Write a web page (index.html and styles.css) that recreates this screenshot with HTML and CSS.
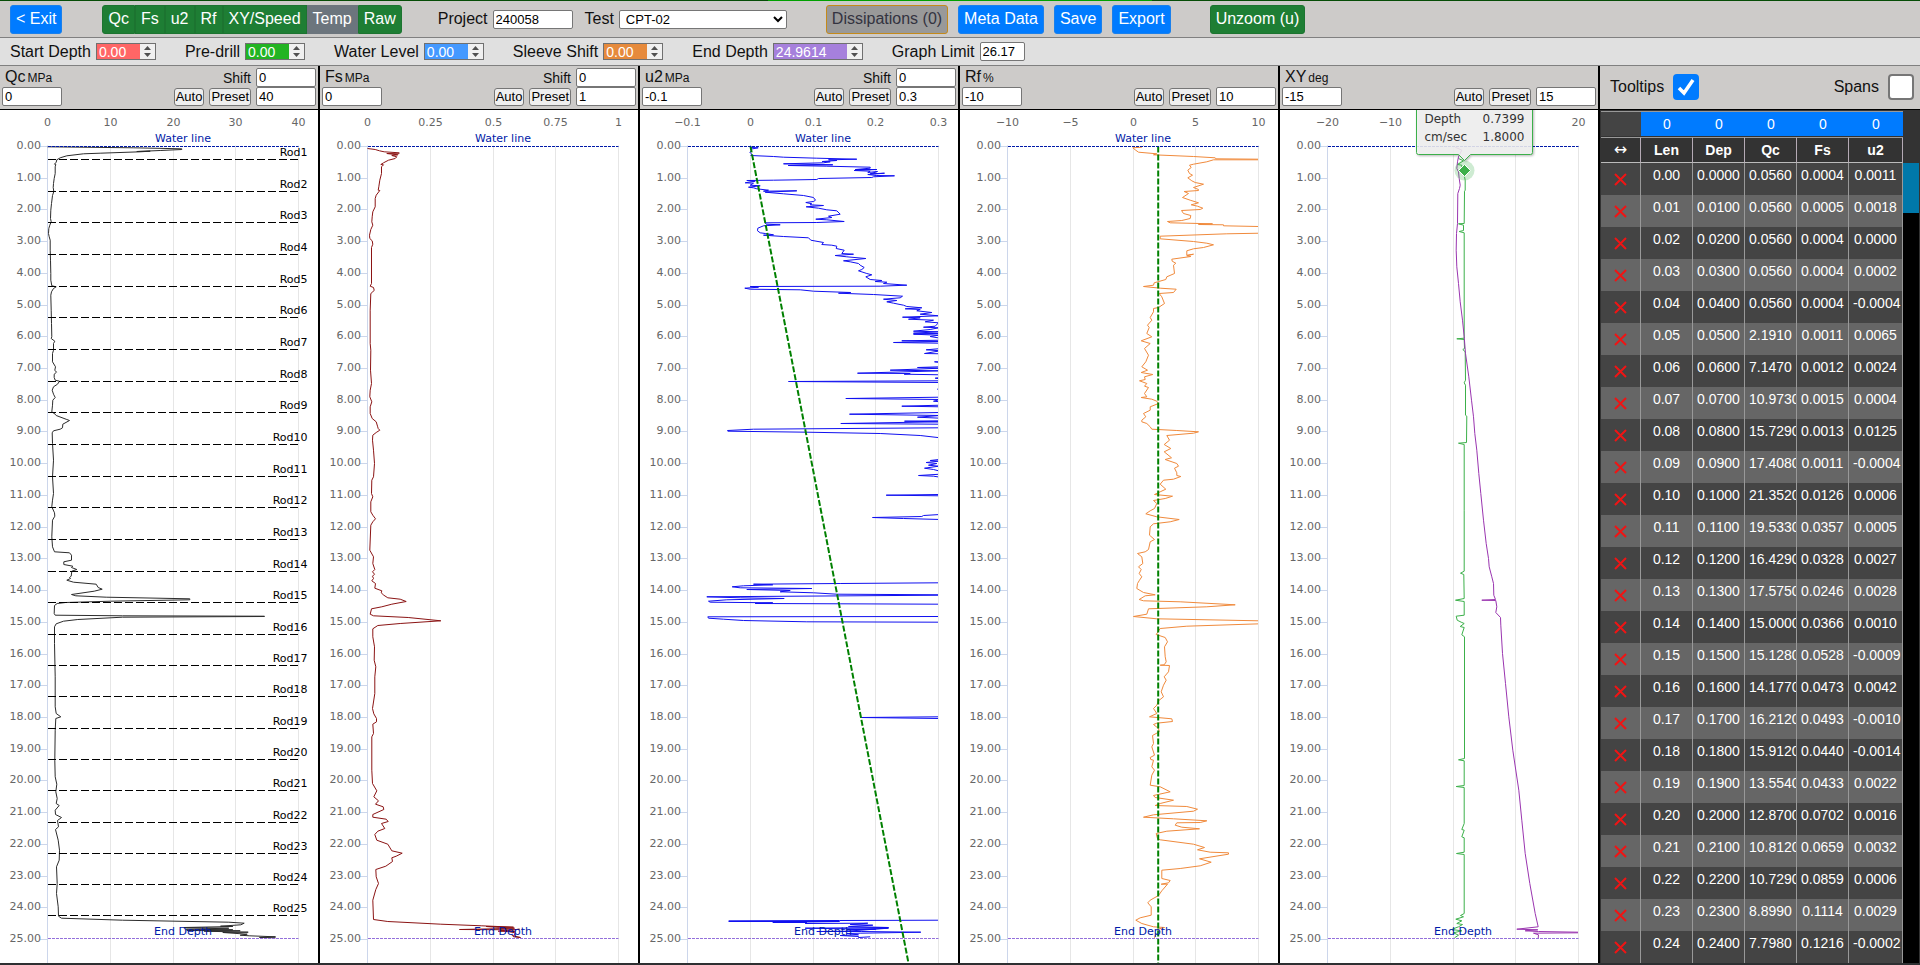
FILE: index.html
```html
<!DOCTYPE html>
<html lang="en">
<head>
    <meta charset="UTF-8">
    <meta name="viewport" content="width=device-width, initial-scale=1.0">
    <title>CPT Editor</title>
    <link rel="stylesheet" href="styles.css">
</head>
<body>
    <div class="progress"></div>
    <header class="toolbar">
        <button class="btn blue exit">&lt; Exit</button>
        <div class="btn-group">
            <button class="btn green">Qc</button>
            <button class="btn green">Fs</button>
            <button class="btn green">u2</button>
            <button class="btn green">Rf</button>
            <button class="btn green">XY/Speed</button>
            <button class="btn grey">Temp</button>
            <button class="btn green">Raw</button>
        </div>
        <div class="field project">
            <label for="project">Project</label>
            <input type="text" id="project" value="240058">
        </div>
        <div class="field test">
            <label for="test">Test</label>
            <select id="test"><option>CPT-02</option></select>
        </div>
        <div class="actions">
            <button class="btn dissipations" disabled>Dissipations (0)</button>
            <button class="btn blue">Meta Data</button>
            <button class="btn blue">Save</button>
            <button class="btn blue">Export</button>
        </div>
        <button class="btn green">Unzoom (u)</button>
    </header>

    <section class="settings">
        <div class="field">
            <label for="startDepth">Start Depth</label>
            <input class="red" type="number" id="startDepth" step="0.01" value="0.00">
        </div>
        <div class="field">
            <label for="predrill">Pre-drill</label>
            <input class="lime" type="number" id="predrill" step="0.01" value="0.00">
        </div>
        <div class="field">
            <label for="waterLevel">Water Level</label>
            <input class="sky" type="number" id="waterLevel" step="0.01" value="0.00">
        </div>
        <div class="field">
            <label for="sleeveShift">Sleeve Shift</label>
            <input class="orange" type="number" id="sleeveShift" step="0.01" value="0.00">
        </div>
        <div class="field">
            <label for="endDepth">End Depth</label>
            <input class="purple" type="number" id="endDepth" step="0.0001" value="24.9614">
        </div>
        <div class="field">
            <label for="graphLimit">Graph Limit</label>
            <input class="limit" type="text" id="graphLimit" value="26.17">
        </div>
    </section>

    <main class="main">
        <section class="panel">
            <div class="panel-head">
                <div class="panel-left">
                    <h2>Qc<small>MPa</small></h2>
                    <input type="text" value="0" aria-label="Qc minimum">
                </div>
                <div class="panel-right">
                    <div class="line"><label for="qcShift">Shift</label><input type="text" id="qcShift" value="0"></div>
                    <div class="line"><button>Auto</button><button>Preset</button><input type="text" value="40" aria-label="Qc maximum"></div>
                </div>
            </div>
            <svg class="chart" id="qc"></svg>
        </section>
        <section class="panel">
            <div class="panel-head">
                <div class="panel-left">
                    <h2>Fs<small>MPa</small></h2>
                    <input type="text" value="0" aria-label="Fs minimum">
                </div>
                <div class="panel-right">
                    <div class="line"><label for="fsShift">Shift</label><input type="text" id="fsShift" value="0"></div>
                    <div class="line"><button>Auto</button><button>Preset</button><input type="text" value="1" aria-label="Fs maximum"></div>
                </div>
            </div>
            <svg class="chart" id="fs"></svg>
        </section>
        <section class="panel">
            <div class="panel-head">
                <div class="panel-left">
                    <h2>u2<small>MPa</small></h2>
                    <input type="text" value="-0.1" aria-label="u2 minimum">
                </div>
                <div class="panel-right">
                    <div class="line"><label for="u2Shift">Shift</label><input type="text" id="u2Shift" value="0"></div>
                    <div class="line"><button>Auto</button><button>Preset</button><input type="text" value="0.3" aria-label="u2 maximum"></div>
                </div>
            </div>
            <svg class="chart" id="u2"></svg>
        </section>
        <section class="panel">
            <div class="panel-head">
                <div class="panel-left">
                    <h2>Rf<small>%</small></h2>
                    <input type="text" value="-10" aria-label="Rf minimum">
                </div>
                <div class="panel-right">
                    <div class="line"><button>Auto</button><button>Preset</button><input type="text" value="10" aria-label="Rf maximum"></div>
                </div>
            </div>
            <svg class="chart" id="rf"></svg>
        </section>
        <section class="panel">
            <div class="panel-head">
                <div class="panel-left">
                    <h2>XY<small>deg</small></h2>
                    <input type="text" value="-15" aria-label="XY minimum">
                </div>
                <div class="panel-right">
                    <div class="line"><button>Auto</button><button>Preset</button><input type="text" value="15" aria-label="XY maximum"></div>
                </div>
            </div>
            <svg class="chart" id="xy"></svg>
        </section>

        <aside class="side">
            <div class="side-head">
                <div class="check">
                    <label for="tooltips">Tooltips</label>
                    <input type="checkbox" id="tooltips" checked>
                </div>
                <div class="check">
                    <label for="spans">Spans</label>
                    <input type="checkbox" id="spans">
                </div>
            </div>
            <div class="side-body">
                <table class="readings">
                    <colgroup><col class="c-del"><col><col><col><col><col class="c-last"></colgroup>
                    <thead>
                        <tr class="sums"><td></td><td>0</td><td>0</td><td>0</td><td>0</td><td>0</td></tr>
                        <tr class="names"><th class="arrow">&#8596;</th><th>Len</th><th>Dep</th><th>Qc</th><th>Fs</th><th>u2</th></tr>
                    </thead>
                    <tbody id="rows"></tbody>
                </table>
                <div class="scroll"><div class="thumb"></div></div>
            </div>
        </aside>
    </main>
    <div class="bottom"></div>
    <script src="script.js"></script>
</body>
</html>
```

FILE: styles.css
```css
* {
    margin: 0;
    padding: 0;
    box-sizing: border-box;
}
body {
    height: 100vh;
    display: flex;
    flex-direction: column;
    overflow: hidden;
    font-family: "Liberation Sans", Arial, sans-serif;
    font-size: 16px;
    color: #111;
    background: #fff;
}
input, select, button {
    font-family: inherit;
    font-size: 13px;
}
input, select {
    height: 19px;
    border: 1px solid #767676;
    border-radius: 2px;
    background: #fff;
    color: #000;
    padding: 0 2px;
}
.progress {
    height: 1px;
    flex: none;
    background: linear-gradient(to right, #064d06 40%, #00a000 40%, #00a000 60%, #064d06 60%);
}

/* top bars */
.toolbar {
    display: flex;
    align-items: center;
    height: 37px;
    flex: none;
    padding: 0 10px;
    background: #cdcbc9;
    border-bottom: 1px solid #808080;
}
.btn {
    height: 29px;
    padding: 0 5px;
    border: 1px solid transparent;
    border-radius: 3px;
    font-size: 16px;
    color: #fff;
    white-space: nowrap;
}
.blue {
    background: #007bff;
    border-color: #1a80ec;
}
.green {
    background: #1e7e34;
    border-color: #1c7430;
}
.grey {
    background: #6c757d;
    border-color: #6c757d;
}
.dissipations {
    background: #999;
    border-color: #c48a1a;
    color: #333340;
}
.exit {
    margin-right: 40px;
}
.btn-group {
    display: flex;
    margin-right: 36px;
}
.btn-group .btn {
    border-radius: 0;
}
.btn-group .btn:first-child {
    border-radius: 3px 0 0 3px;
}
.btn-group .btn:last-child {
    border-radius: 0 3px 3px 0;
}
.field {
    display: flex;
    align-items: center;
    gap: 5px;
    white-space: nowrap;
}
.project {
    margin-right: 12px;
}
.project input {
    width: 80px;
}
.test {
    margin-right: 39px;
}
.test select {
    width: 168px;
}
.actions {
    display: flex;
    gap: 10px;
    margin-right: 39px;
}
.settings {
    display: flex;
    align-items: center;
    gap: 29px;
    height: 28px;
    flex: none;
    padding: 0 10px;
    background: #e0e0e0;
    border-bottom: 1px solid #808080;
}
.settings input[type=number] {
    width: 60px;
    height: 17px;
    border: 1px solid #707070;
    border-radius: 0;
    padding: 0 0 0 2px;
    font-size: 14px;
    color: #fff;
}
.settings input::-webkit-inner-spin-button {
    appearance: none;
    opacity: 1;
    width: 15px;
    height: 15px;
    background: #f0f0f0 url("data:image/svg+xml,%3Csvg xmlns='http://www.w3.org/2000/svg' viewBox='0 0 15 15'%3E%3Cpath d='M4 6l3.5-4L11 6zM4 9l3.5 4L11 9z' fill='%23505050'/%3E%3C/svg%3E");
}
.settings .red { background: #ff6666; }
.settings .lime { background: #22b422; }
.settings .sky { background: #4499ff; }
.settings .orange { background: #e68a3c; }
.settings .purple { background: #a680dc; }
.settings #endDepth {
    width: 90px;
}
.settings .limit {
    width: 45px;
}

/* chart panels */
.main {
    flex: 1;
    min-height: 0;
    display: grid;
    grid-template-columns: repeat(6, minmax(0, 1fr));
}
.panel {
    display: flex;
    flex-direction: column;
    min-height: 0;
    border-right: 2px solid #000;
}
.panel-head {
    display: flex;
    justify-content: space-between;
    height: 44px;
    flex: none;
    padding: 2px 2px 3px;
    background: #cdcbc9;
    border-bottom: 1px solid #000;
}
.panel-head input {
    width: 60px;
}
.panel-left, .panel-right {
    display: flex;
    flex-direction: column;
    justify-content: space-between;
}
.panel-right {
    align-items: flex-end;
    justify-content: flex-end;
}
.panel-left h2 {
    font-size: 16px;
    line-height: 18px;
    font-weight: normal;
    padding-left: 3px;
}
.panel-left small {
    font-size: 12px;
    margin-left: 2px;
}
.line {
    display: flex;
    align-items: center;
    gap: 5px;
    font-size: 14px;
}
.line button {
    height: 18px;
    padding: 0 1px;
    border: 1px solid #767676;
    border-radius: 3px;
    background: #efefef;
    color: #000;
    font-size: 13px;
}
.chart {
    flex: 1;
    min-height: 0;
    width: 100%;
    display: block;
    overflow: hidden;
    font-family: "DejaVu Sans", Verdana, sans-serif;
    font-size: 11px;
}
.grid { stroke: #e6e6e6; }
.axis { stroke: #ccd6eb; }
.tick { fill: #666; }
.trace {
    fill: none;
    stroke-width: 1;
    stroke-linejoin: round;
}
.hydro {
    stroke: #008000;
    stroke-width: 2;
    stroke-dasharray: 6 2;
}
.water {
    stroke: #001aa8;
    stroke-dasharray: 3 1;
}
.end {
    stroke: #9370db;
    stroke-dasharray: 3 1;
}
.note { fill: #001aa8; }
.rod {
    stroke: #000;
    stroke-dasharray: 8 3;
}
.rod-name { fill: #000; }
.tip {
    fill: #f7f7f7;
    fill-opacity: 0.85;
    stroke: #3cb04a;
    filter: drop-shadow(1px 1px 1px rgba(0, 0, 0, 0.3));
}
.tip-text {
    fill: #333;
    font-size: 12px;
}

/* readings table */
.side {
    display: flex;
    flex-direction: column;
    min-height: 0;
    overflow: hidden;
    background: #333;
}
.side-head {
    display: flex;
    justify-content: space-between;
    align-items: center;
    height: 44px;
    flex: none;
    padding: 0 6px 2px 10px;
    background: #cdcbc9;
    border-bottom: 1px solid #000;
}
.check {
    display: flex;
    align-items: center;
    gap: 9px;
}
.check input {
    appearance: none;
    width: 26px;
    height: 26px;
    border: 2px solid #767676;
    border-radius: 4px;
}
.check input:checked {
    border-color: #007bff;
    background: #007bff url("data:image/svg+xml,%3Csvg xmlns='http://www.w3.org/2000/svg' viewBox='0 0 22 22'%3E%3Cpath d='M4 12l5 5 9-13' fill='none' stroke='white' stroke-width='3.5'/%3E%3C/svg%3E");
}
.side-body {
    flex: 1;
    min-height: 0;
    display: flex;
    overflow: hidden;
    padding: 1px 1px 0;
}
.readings {
    flex: 1;
    width: 100%;
    table-layout: fixed;
    border-collapse: separate;
    border-spacing: 0;
    font-size: 14px;
    color: #fff;
    text-align: center;
    align-self: flex-start;
}
.c-del { width: 40px; }
.c-last { width: 54px; }
.readings td, .readings th {
    padding: 0 4px;
    overflow: hidden;
    white-space: nowrap;
    border-right: 1px solid #999;
}
.sums td {
    height: 26px;
    background: #007bff;
    border-top: 1px solid #999;
    border-right: none;
    border-bottom: 1px solid #333;
}
.sums td:first-child {
    background: #444;
}
.readings .names th {
    height: 26px;
    border-top: 1px solid #999;
    border-bottom: 1px solid #bbb;
    border-right-color: #b5aab5;
}
.readings .names .arrow {
    font-family: "DejaVu Sans", sans-serif;
    font-size: 16px;
    line-height: 16px;
    font-weight: normal;
}
.readings tbody td {
    height: 32px;
    line-height: 16px;
    padding-top: 4px;
    vertical-align: top;
    background: #444;
}
.readings tbody tr:nth-child(even) td {
    background: #666;
}
.del {
    display: block;
    width: 13px;
    height: 13px;
    margin: 6px auto 0;
    background: none;
    border: none;
}
.del svg {
    display: block;
    stroke: #f01414;
    stroke-width: 2;
}
.scroll {
    width: 16px;
    margin-top: 52px;
    background: #000;
}
.thumb {
    height: 50px;
    background: #0078aa;
}
.bottom {
    height: 2px;
    flex: none;
    background: #2e3032;
}
```

FILE: script.js
```javascript
// plot margins inside each chart
const LEFT = 47.5, RIGHT = 19.5, TOP = 36.5, BOTTOM = 23.5;
const END_DEPTH = 24.9614;

// trace points and rod lines are stored on a 753 x 2379 grid that starts at 142,109
const GX = 142, GY = 109, GW = 753, GH = 2379;

const charts = {
    qc: {
        labels: ['0', '10', '20', '30', '40'],
        rods: [148, 244, 337, 433, 529, 622, 718, 814, 907, 1003, 1099, 1192, 1288, 1384, 1477, 1573, 1666, 1759, 1855, 1948, 2041, 2137, 2230, 2323, 2416],
        traces: [['#2c2c2c', '144,109 143,110 400,113 545,116 545,118 480,121 410,124 450,123 420,125 300,129 250,131 200,137 180,143 170,149 168,156 163,162 167,163 165,170 165,190 162,205 160,220 159,232 161,244 157,256 154,280 152,300 151,325 153,335 149,345 146,355 145,370 147,380 150,390 150,420 151,450 152,490 152,510 155,527 168,530 160,535 154,545 152,555 153,600 154,640 155,680 153,685 164,693 160,700 160,720 157,730 157,755 166,770 164,780 169,786 162,792 162,802 165,810 178,813 172,822 160,830 156,840 160,852 165,862 158,870 157,885 155,905 165,912 168,916 200,928 208,931 188,942 187,953 180,957 160,962 156,968 157,1000 160,1050 157,1100 160,1150 157,1170 155,1190 163,1208 164,1218 157,1230 155,1280 157,1310 163,1325 208,1328 214,1335 214,1350 191,1355 191,1363 218,1368 214,1372 230,1378 215,1383 213,1398 208,1402 211,1405 200,1410 220,1416 288,1422 294,1432 306,1437 282,1443 214,1453 227,1457 318,1461 569,1466 569,1469 331,1473 196,1477 171,1480 163,1486 162,1510 165,1515 367,1517 793,1518 793,1519 367,1521 233,1528 190,1533 168,1541 163,1550 163,1600 165,1700 165,1790 168,1810 182,1820 167,1825 165,1860 164,1950 165,2000 170,2022 167,2045 171,2065 168,2080 177,2086 165,2100 166,2113 184,2122 172,2131 175,2150 166,2158 174,2190 178,2220 177,2250 169,2270 171,2320 169,2350 174,2390 175,2418 184,2424 367,2430 686,2436 732,2439 722,2444 661,2448 698,2449 551,2452 686,2454 558,2457 698,2459 560,2461 720,2462 612,2463 744,2466 668,2467 741,2472 720,2475 747,2477 826,2480 778,2482 826,2483']]
    },
    fs: {
        labels: ['0', '0.25', '0.5', '0.75', '1'],
        traces: [['#8b1414', '142,115 165,118 178,122 192,125 237,128 236,131 200,130 233,134 215,136 230,140 225,145 205,150 190,158 182,163 190,164 184,170 184,190 179,210 176,230 174,240 179,241 168,255 165,265 165,290 158,305 156,320 155,335 158,345 152,358 148,375 149,385 156,392 158,402 154,412 154,520 150,528 160,532 162,540 157,546 152,550 150,600 150,700 152,720 151,780 154,820 150,840 149,860 155,875 150,890 150,910 156,925 168,935 172,948 174,955 179,960 168,967 158,975 157,990 160,1020 163,1060 160,1100 155,1110 154,1150 158,1160 152,1175 152,1205 158,1215 166,1226 158,1235 152,1245 149,1320 160,1340 158,1360 164,1378 157,1385 163,1392 157,1398 160,1405 155,1412 166,1420 164,1434 185,1442 183,1448 191,1455 203,1463 240,1467 258,1474 215,1482 185,1490 154,1496 150,1512 160,1517 264,1522 362,1532 240,1540 173,1546 158,1556 158,1580 163,1610 162,1650 167,1670 164,1700 164,1750 157,1795 161,1811 169,1825 169,1835 158,1842 160,1870 155,1880 155,1980 157,2020 170,2042 161,2060 175,2072 166,2082 189,2090 191,2098 158,2113 158,2121 198,2127 204,2134 184,2140 194,2155 173,2163 164,2173 170,2190 203,2202 215,2222 246,2229 228,2238 215,2243 217,2254 197,2268 167,2278 168,2300 175,2320 167,2338 158,2370 160,2428 203,2434 362,2442 485,2447 580,2451 498,2449 583,2454 520,2456 418,2458 580,2459 598,2457 534,2463 585,2464 540,2460 585,2468 580,2480 601,2482 575,2476']]
    },
    u2: {
        labels: ['−0.1', '0', '0.1', '0.2', '0.3'],
        hydro: [331, 109, 805, 2559],
        traces: [['#1010f0', '331,106 333,112 354,113 331,117 335,122 329,126 335,132 332,136 400,139 430,141 530,144 650,147 565,149 590,151 546,154 570,155 550,158 430,161 578,164 444,166 560,168 690,171 690,174 645,178 710,178 642,181 690,183 683,187 712,184 690,191 733,189 683,193 708,196 763,197 700,200 695,202 535,205 530,208 400,210 320,211 345,213 315,218 340,219 330,225 360,227 325,231 340,233 350,236 385,240 370,243 470,242 375,246 430,251 490,256 520,262 526,270 520,274 497,277 515,281 510,284 550,286 498,290 535,294 560,299 590,302 600,312 565,318 575,322 527,327 560,329 612,334 530,337 375,338 378,342 420,344 370,347 353,354 352,362 360,368 375,370 400,374 370,375 430,379 505,383 512,390 550,397 545,403 575,405 590,408 588,415 612,420 605,430 640,432 585,436 620,440 677,445 610,452 630,455 655,460 660,465 672,472 665,478 655,482 680,490 695,494 677,500 690,508 725,511 705,514 740,516 730,520 800,525 720,528 330,529 355,531 314,534 330,537 480,539 520,543 632,547 595,549 700,553 787,558 780,563 730,567 770,571 740,575 760,579 790,585 800,589 845,593 795,596 840,598 830,602 875,607 840,612 895,617 787,621 840,623 805,627 880,630 855,635 895,638 885,648 850,651 895,653 870,658 820,663 895,665 820,669 895,670 820,672 895,675 870,679 900,684 900,690 785,692 900,694 760,697 900,699 905,715 858,719 900,722 853,730 900,731 900,755 883,755 900,757 900,770 832,772 900,774 750,780 900,782 652,789 810,790 792,792 900,794 900,802 885,804 900,806 900,812 445,814 900,817 900,835 892,837 900,839 900,861 617,865 900,868 880,873 900,875 900,885 785,888 900,890 900,907 628,912 900,916 832,921 900,924 900,932 793,933 900,935 602,940 900,942 900,953 340,957 262,961 263,963 500,966 720,970 840,976 900,983 905,1047 870,1051 895,1053 858,1057 890,1060 865,1065 895,1068 853,1074 880,1078 895,1082 900,1092 835,1096 880,1098 900,1101 900,1153 738,1155 900,1157 900,1213 850,1216 845,1219 697,1222 790,1225 900,1228 900,1418 600,1420 340,1422 398,1424 310,1427 276,1430 300,1433 515,1435 320,1438 450,1441 420,1445 520,1448 590,1452 900,1454 900,1455 200,1460 300,1463 432,1465 260,1469 205,1473 210,1476 398,1478 345,1480 600,1481 900,1482 900,1519 203,1520 205,1524 250,1527 310,1531 500,1535 900,1536 900,1820 662,1822 900,1825 900,2430 598,2431 266,2432 266,2434 598,2434 398,2437 500,2437 495,2440 683,2439 630,2443 698,2445 625,2449 745,2452 495,2454 707,2457 620,2459 745,2454 620,2463 530,2464 665,2464 842,2466 660,2469 620,2470 655,2474 600,2476 655,2479 655,2482 690,2480']]
    },
    rf: {
        labels: ['−10', '−5', '0', '5', '10'],
        hydro: [594, 109, 594, 2559],
        traces: [['#f08a3c', '550,106 545,111 518,113 525,119 535,126 590,131 580,134 700,139 765,143 767,146 895,147 895,149 760,149 740,155 700,162 688,165 693,172 683,180 688,190 697,195 683,203 695,212 705,217 730,222 700,232 715,238 715,241 672,244 685,250 667,262 690,270 715,278 693,284 712,288 728,294 720,298 664,301 670,310 692,316 690,325 665,331 622,334 630,338 757,341 715,343 790,344 790,347 895,349 900,355 900,369 800,371 600,378 600,386 700,394 740,399 760,404 730,412 700,416 680,422 680,435 700,432 680,437 692,439 635,447 636,453 647,459 640,465 643,490 620,500 617,508 582,518 580,525 550,529 600,534 648,537 640,547 597,550 605,560 613,580 595,592 580,595 580,605 570,622 575,630 562,645 567,652 560,670 575,680 543,692 570,700 553,715 565,735 557,755 545,770 562,780 543,787 578,793 553,800 555,808 538,812 560,820 553,828 565,832 553,850 560,860 543,862 575,867 590,873 595,880 570,890 570,900 550,910 557,920 545,930 545,935 560,940 570,950 575,957 650,961 715,965 700,969 620,976 628,990 612,1003 632,1015 612,1025 634,1043 615,1048 650,1060 655,1068 643,1074 650,1088 650,1096 662,1099 640,1107 610,1110 600,1122 617,1137 600,1145 583,1153 637,1158 615,1165 580,1171 590,1180 583,1195 570,1202 557,1211 590,1220 657,1228 630,1235 580,1241 570,1250 568,1275 583,1288 570,1295 565,1318 555,1325 532,1330 545,1340 548,1360 535,1370 543,1378 537,1390 545,1400 538,1410 532,1420 530,1435 550,1447 585,1454 555,1457 537,1468 550,1472 660,1475 825,1484 740,1490 565,1496 560,1512 520,1519 590,1526 895,1532 900,1541 680,1548 600,1555 588,1573 615,1582 622,1595 613,1610 615,1640 618,1655 612,1664 600,1665 628,1666 625,1685 612,1700 618,1710 610,1725 603,1745 610,1760 595,1772 590,1785 580,1795 590,1810 568,1820 635,1826 637,1834 590,1839 580,1843 595,1855 597,1865 577,1876 580,1900 575,1910 583,1935 570,1942 572,1948 580,1950 575,1970 583,1980 575,1995 570,2025 600,2030 630,2045 580,2056 585,2062 640,2070 600,2080 585,2086 680,2089 712,2097 700,2103 580,2114 550,2121 640,2126 740,2132 720,2137 650,2138 645,2145 665,2151 718,2156 620,2163 588,2170 592,2185 600,2189 700,2202 733,2212 712,2219 750,2226 805,2228 805,2232 718,2246 753,2256 720,2267 660,2275 605,2280 605,2305 630,2311 625,2318 603,2322 622,2322 605,2342 595,2356 570,2370 563,2378 573,2390 573,2415 540,2423 527,2430 545,2440 580,2450 613,2452 590,2458 600,2465 585,2475 583,2483']]
    },
    xy: {
        labels: ['−20', '−10', '', '', '20'],
        tooltip: [['Depth', '0.7399'], ['cm/sec', '1.8000']],
        traces: [
            ['#3cb04a', '535,145 550,152 532,163 545,165 545,175 552,181 553,200 555,210 555,240 553,243 552,340 535,341 550,345 550,361 537,364 552,368 552,684 530,686 552,688 553,715 548,718 555,725 556,810 552,818 556,825 556,915 560,918 559,997 535,999 552,1003 552,1200 552,1383 541,1389 551,1393 552,1465 526,1470 552,1474 552,1515 528,1518 531,1530 543,1536 552,1540 540,1549 552,1552 545,1574 553,1580 553,1945 535,1949 552,1952 552,2026 528,2029 552,2032 552,2140 545,2158 552,2160 545,2180 552,2183 552,2226 529,2230 552,2233 552,2410 541,2416 550,2420 527,2427 545,2432 530,2440 547,2443 535,2450 514,2458 545,2462 520,2468 535,2475 523,2483'],
            ['#9a35b0', '525,111 545,120 535,140 532,155 530,175 535,185 537,205 540,225 538,235 533,250 532,340 529,370 528,420 530,470 535,520 540,575 547,630 552,680 556,730 566,800 574,870 580,920 584,970 590,1020 596,1090 602,1150 610,1230 618,1300 625,1345 627,1370 635,1400 640,1420 641,1455 646,1468 605,1470 647,1471 650,1490 647,1507 661,1522 662,1545 667,1630 676,1720 686,1820 698,1920 716,2040 725,2130 735,2230 749,2320 765,2410 774,2450 710,2457 773,2459 735,2462 775,2464 895,2466 895,2468 760,2469 775,2474 774,2484']
        ]
    }
};

function line(cls, x1, y1, x2, y2) {
    return `<line class="${cls}" x1="${x1}" y1="${y1}" x2="${x2}" y2="${y2}"/>`;
}
function text(cls, x, y, anchor, str) {
    return `<text class="${cls}" x="${x}" y="${y}" text-anchor="${anchor}">${str}</text>`;
}

function drawChart(id) {
    const svg = document.getElementById(id);
    const chart = charts[id];
    const w = svg.clientWidth, h = svg.clientHeight;
    const pw = w - LEFT - RIGHT;
    const metre = (h - TOP - BOTTOM) / 25;
    const right = LEFT + pw;
    const px = x => (LEFT + (x - GX) / GW * pw).toFixed(1);
    const py = y => (TOP + (y - GY) / GH * metre * 25).toFixed(1);
    const row = d => Math.floor(TOP + d * metre);
    let out = '';

    chart.labels.forEach((label, i) => {
        const x = Math.floor(LEFT + pw * i / 4) + 0.5;
        out += line(i ? 'grid' : 'axis', x, TOP - 1, x, h);
        out += text('tick', x, 16, 'middle', label);
    });
    for (let d = 0; d <= 25; d++) {
        out += line('axis', 40, row(d) + 0.5, LEFT, row(d) + 0.5);
        out += text('tick', 41, row(d) + 3, 'end', d.toFixed(2));
    }

    out += `<clipPath id="clip-${id}"><rect x="${LEFT - 0.5}" y="${TOP - 1}" width="${pw}" height="${h}"/></clipPath>`;
    out += `<g clip-path="url(#clip-${id})">`;
    chart.traces.forEach(([color, pts]) => {
        const points = pts.split(' ').map(p => {
            const [x, y] = p.split(',');
            return px(x) + ',' + py(y);
        }).join(' ');
        out += `<polyline class="trace" stroke="${color}" points="${points}"/>`;
    });
    if (chart.hydro) {
        const [x1, y1, x2, y2] = chart.hydro;
        out += line('hydro', px(x1), py(y1), px(x2), py(y2));
    }
    out += '</g>';

    // plot lines
    const start = Math.ceil(LEFT);
    out += line('water', start, TOP, right, TOP);
    const endY = row(END_DEPTH) + 0.5;
    out += line('end', start, endY, right, endY);
    const mid = LEFT + pw / 2 + 10;
    if (!chart.tooltip) out += text('note', mid, 32, 'middle', 'Water line');
    out += text('note', mid, endY - 4, 'middle', 'End Depth');
    (chart.rods || []).forEach((rod, i) => {
        const y = Math.floor(py(rod)) + 0.5;
        out += line('rod', start, y, right, y);
        out += text('rod-name', right + 9, y - 4, 'end', 'Rod' + (i + 1));
    });

    if (chart.tooltip) {
        const x = Math.floor(px(553)) + 0.5, y = 60.5;
        out += `<path class="tip" d="M${x - 48} -20V42.5a2 2 0 0 0 2 2H${x - 6}l6 6 6-6H${x + 66}a2 2 0 0 0 2-2V-20z"/>`;
        out += `<circle cx="${x}" cy="${y}" r="10" fill="#3cb04a" fill-opacity="0.25"/>`;
        out += `<path d="M${x} ${y - 6}l6 6-6 6-6-6z" fill="#3cb04a" stroke="#fff"/>`;
        chart.tooltip.forEach(([name, value], i) => {
            out += text('tip-text', x - 40, 13 + i * 18, 'start', name);
            out += text('tip-text', x + 60, 13 + i * 18, 'end', value);
        });
    }
    svg.innerHTML = out;
}

function drawAll() {
    Object.keys(charts).forEach(drawChart);
}

// Qc, Fs, u2 for every centimetre
const readings = [
    ['0.0560', '0.0004', '0.0011'],
    ['0.0560', '0.0005', '0.0018'],
    ['0.0560', '0.0004', '0.0000'],
    ['0.0560', '0.0004', '0.0002'],
    ['0.0560', '0.0004', '-0.0004'],
    ['2.1910', '0.0011', '0.0065'],
    ['7.1470', '0.0012', '0.0024'],
    ['10.9730', '0.0015', '0.0004'],
    ['15.7290', '0.0013', '0.0125'],
    ['17.4080', '0.0011', '-0.0004'],
    ['21.3520', '0.0126', '0.0006'],
    ['19.5330', '0.0357', '0.0005'],
    ['16.4290', '0.0328', '0.0027'],
    ['17.5750', '0.0246', '0.0028'],
    ['15.0000', '0.0366', '0.0010'],
    ['15.1280', '0.0528', '-0.0009'],
    ['14.1770', '0.0473', '0.0042'],
    ['16.2120', '0.0493', '-0.0010'],
    ['15.9120', '0.0440', '-0.0014'],
    ['13.5540', '0.0433', '0.0022'],
    ['12.8700', '0.0702', '0.0016'],
    ['10.8120', '0.0659', '0.0032'],
    ['10.7290', '0.0859', '0.0006'],
    ['8.8990', '0.1114', '0.0029'],
    ['7.7980', '0.1216', '-0.0002']
];

document.getElementById('rows').innerHTML = readings.map((r, i) => {
    const depth = i / 100;
    return `<tr><td><button class="del" aria-label="Delete row"><svg width="13" height="13" viewBox="0 0 13 13"><path d="M1 1l11 11M12 1L1 12"/></svg></button></td>` +
        `<td>${depth.toFixed(2)}</td><td>${depth.toFixed(4)}</td>` +
        r.map(v => `<td>${v}</td>`).join('') + '</tr>';
}).join('');

drawAll();
window.addEventListener('resize', drawAll);
```
